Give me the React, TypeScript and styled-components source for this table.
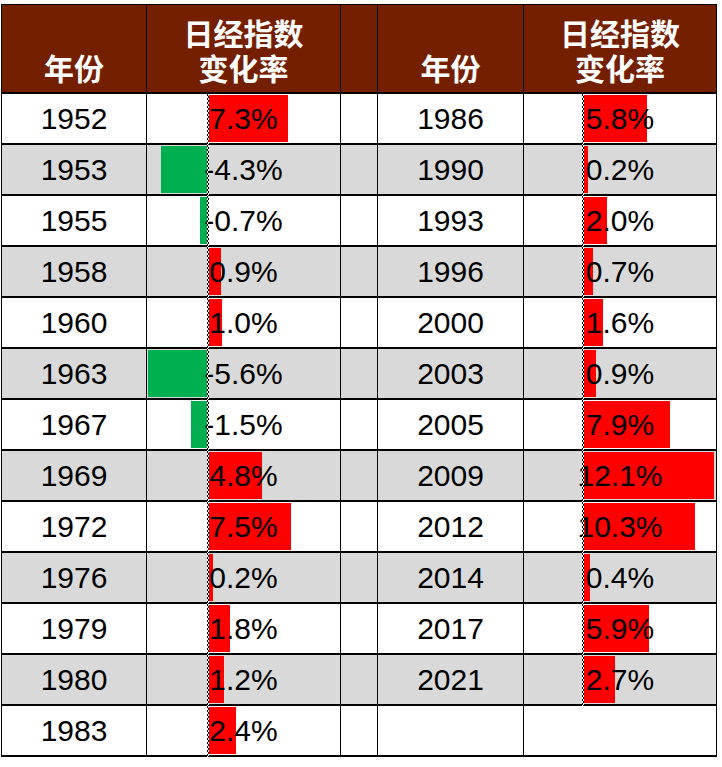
import React from 'react';
import styled, { createGlobalStyle } from 'styled-components';

const GlobalStyle = createGlobalStyle`
  html, body {
    margin: 0;
    padding: 0;
    background: #ffffff;
  }
  * {
    box-sizing: border-box;
  }
`;

// one row of the sheet: year + change on the left, a spacer, year + change on the right
type Entry = { year: string; value: number };

const leftData: Entry[] = [
  { year: '1952', value: 7.3 },
  { year: '1953', value: -4.3 },
  { year: '1955', value: -0.7 },
  { year: '1958', value: 0.9 },
  { year: '1960', value: 1.0 },
  { year: '1963', value: -5.6 },
  { year: '1967', value: -1.5 },
  { year: '1969', value: 4.8 },
  { year: '1972', value: 7.5 },
  { year: '1976', value: 0.2 },
  { year: '1979', value: 1.8 },
  { year: '1980', value: 1.2 },
  { year: '1983', value: 2.4 },
];

const rightData: Entry[] = [
  { year: '1986', value: 5.8 },
  { year: '1990', value: 0.2 },
  { year: '1993', value: 2.0 },
  { year: '1996', value: 0.7 },
  { year: '2000', value: 1.6 },
  { year: '2003', value: 0.9 },
  { year: '2005', value: 7.9 },
  { year: '2009', value: 12.1 },
  { year: '2012', value: 10.3 },
  { year: '2014', value: 0.4 },
  { year: '2017', value: 5.9 },
  { year: '2021', value: 2.7 },
];

const PX_PER_PCT = 10.6;

const Page = styled.div`
  padding-top: 4px;
  padding-left: 1px;
`;

const Sheet = styled.div`
  display: grid;
  grid-template-columns: 145px 194px 37px 146px 193px;
  width: max-content;
  border-top: 1px solid #000;
  border-left: 1px solid #000;
`;

const HeaderCell = styled.div`
  height: 89px;
  background: #731f00;
  border-right: 1px solid #000;
  border-bottom: 2px solid #000;
  display: flex;
  flex-direction: column;
  justify-content: flex-end;
  align-items: center;
  padding-bottom: 7px;
  color: #ffffff;
  font-family: 'Noto Sans CJK SC', 'Microsoft YaHei', sans-serif;
  font-weight: 700;
  font-size: 30px;
  line-height: 35px;
  white-space: nowrap;
`;

const Cell = styled.div<{ $shaded: boolean }>`
  position: relative;
  height: 51px;
  background: ${(p) => (p.$shaded ? '#d9d9d9' : '#ffffff')};
  border-right: 1px solid #000;
  border-bottom: 2px solid #000;
  display: flex;
  align-items: center;
  justify-content: center;
  font-family: 'Liberation Sans', Arial, sans-serif;
  font-size: 30px;
  color: #000;
`;

const Value = styled.span`
  position: relative;
  z-index: 1;
`;

const Bar = styled.div<{ $negative: boolean }>`
  position: absolute;
  top: 1px;
  bottom: 1px;
  background: ${(p) => (p.$negative ? '#00b050' : '#ff0000')};
`;

const Axis = styled.div<{ $at: number }>`
  position: absolute;
  top: 0;
  bottom: -2px;
  left: ${(p) => p.$at}px;
  width: 2px;
  z-index: 2;
  background:
    repeating-linear-gradient(to bottom, #000 0 2px, #fff 2px 4px) 0 0 / 1px 100% no-repeat,
    repeating-linear-gradient(to bottom, #fff 0 2px, #000 2px 4px) 1px 0 / 1px 100% no-repeat;
`;

const ChangeCell = ({ entry, shaded, axisAt }: { entry?: Entry; shaded: boolean; axisAt: number }) => {
  if (!entry) return <Cell $shaded={shaded} />;
  const neg = entry.value < 0;
  const barStyle = neg
    ? { left: axisAt - Math.abs(entry.value) * PX_PER_PCT, width: Math.abs(entry.value) * PX_PER_PCT }
    : { left: axisAt + 2, width: entry.value * PX_PER_PCT + 2 };
  return (
    <Cell $shaded={shaded}>
      <Bar $negative={neg} style={barStyle} />
      <Axis $at={axisAt} />
      <Value>{entry.value.toFixed(1)}%</Value>
    </Cell>
  );
};

const Title = () => (
  <>
    <span>日经指数</span>
    <span>变化率</span>
  </>
);

export default function App() {
  return (
    <>
      <GlobalStyle />
      <Page>
        <Sheet>
          <HeaderCell>年份</HeaderCell>
          <HeaderCell><Title /></HeaderCell>
          <HeaderCell />
          <HeaderCell>年份</HeaderCell>
          <HeaderCell><Title /></HeaderCell>

          {leftData.map((left, i) => {
            const right = rightData[i];
            const shaded = i % 2 === 1;
            return (
              <React.Fragment key={left.year}>
                <Cell $shaded={shaded}><Value>{left.year}</Value></Cell>
                <ChangeCell entry={left} shaded={shaded} axisAt={60} />
                <Cell $shaded={shaded} />
                <Cell $shaded={shaded}>{right && <Value>{right.year}</Value>}</Cell>
                <ChangeCell entry={right} shaded={shaded} axisAt={58} />
              </React.Fragment>
            );
          })}
        </Sheet>
      </Page>
    </>
  );
}
